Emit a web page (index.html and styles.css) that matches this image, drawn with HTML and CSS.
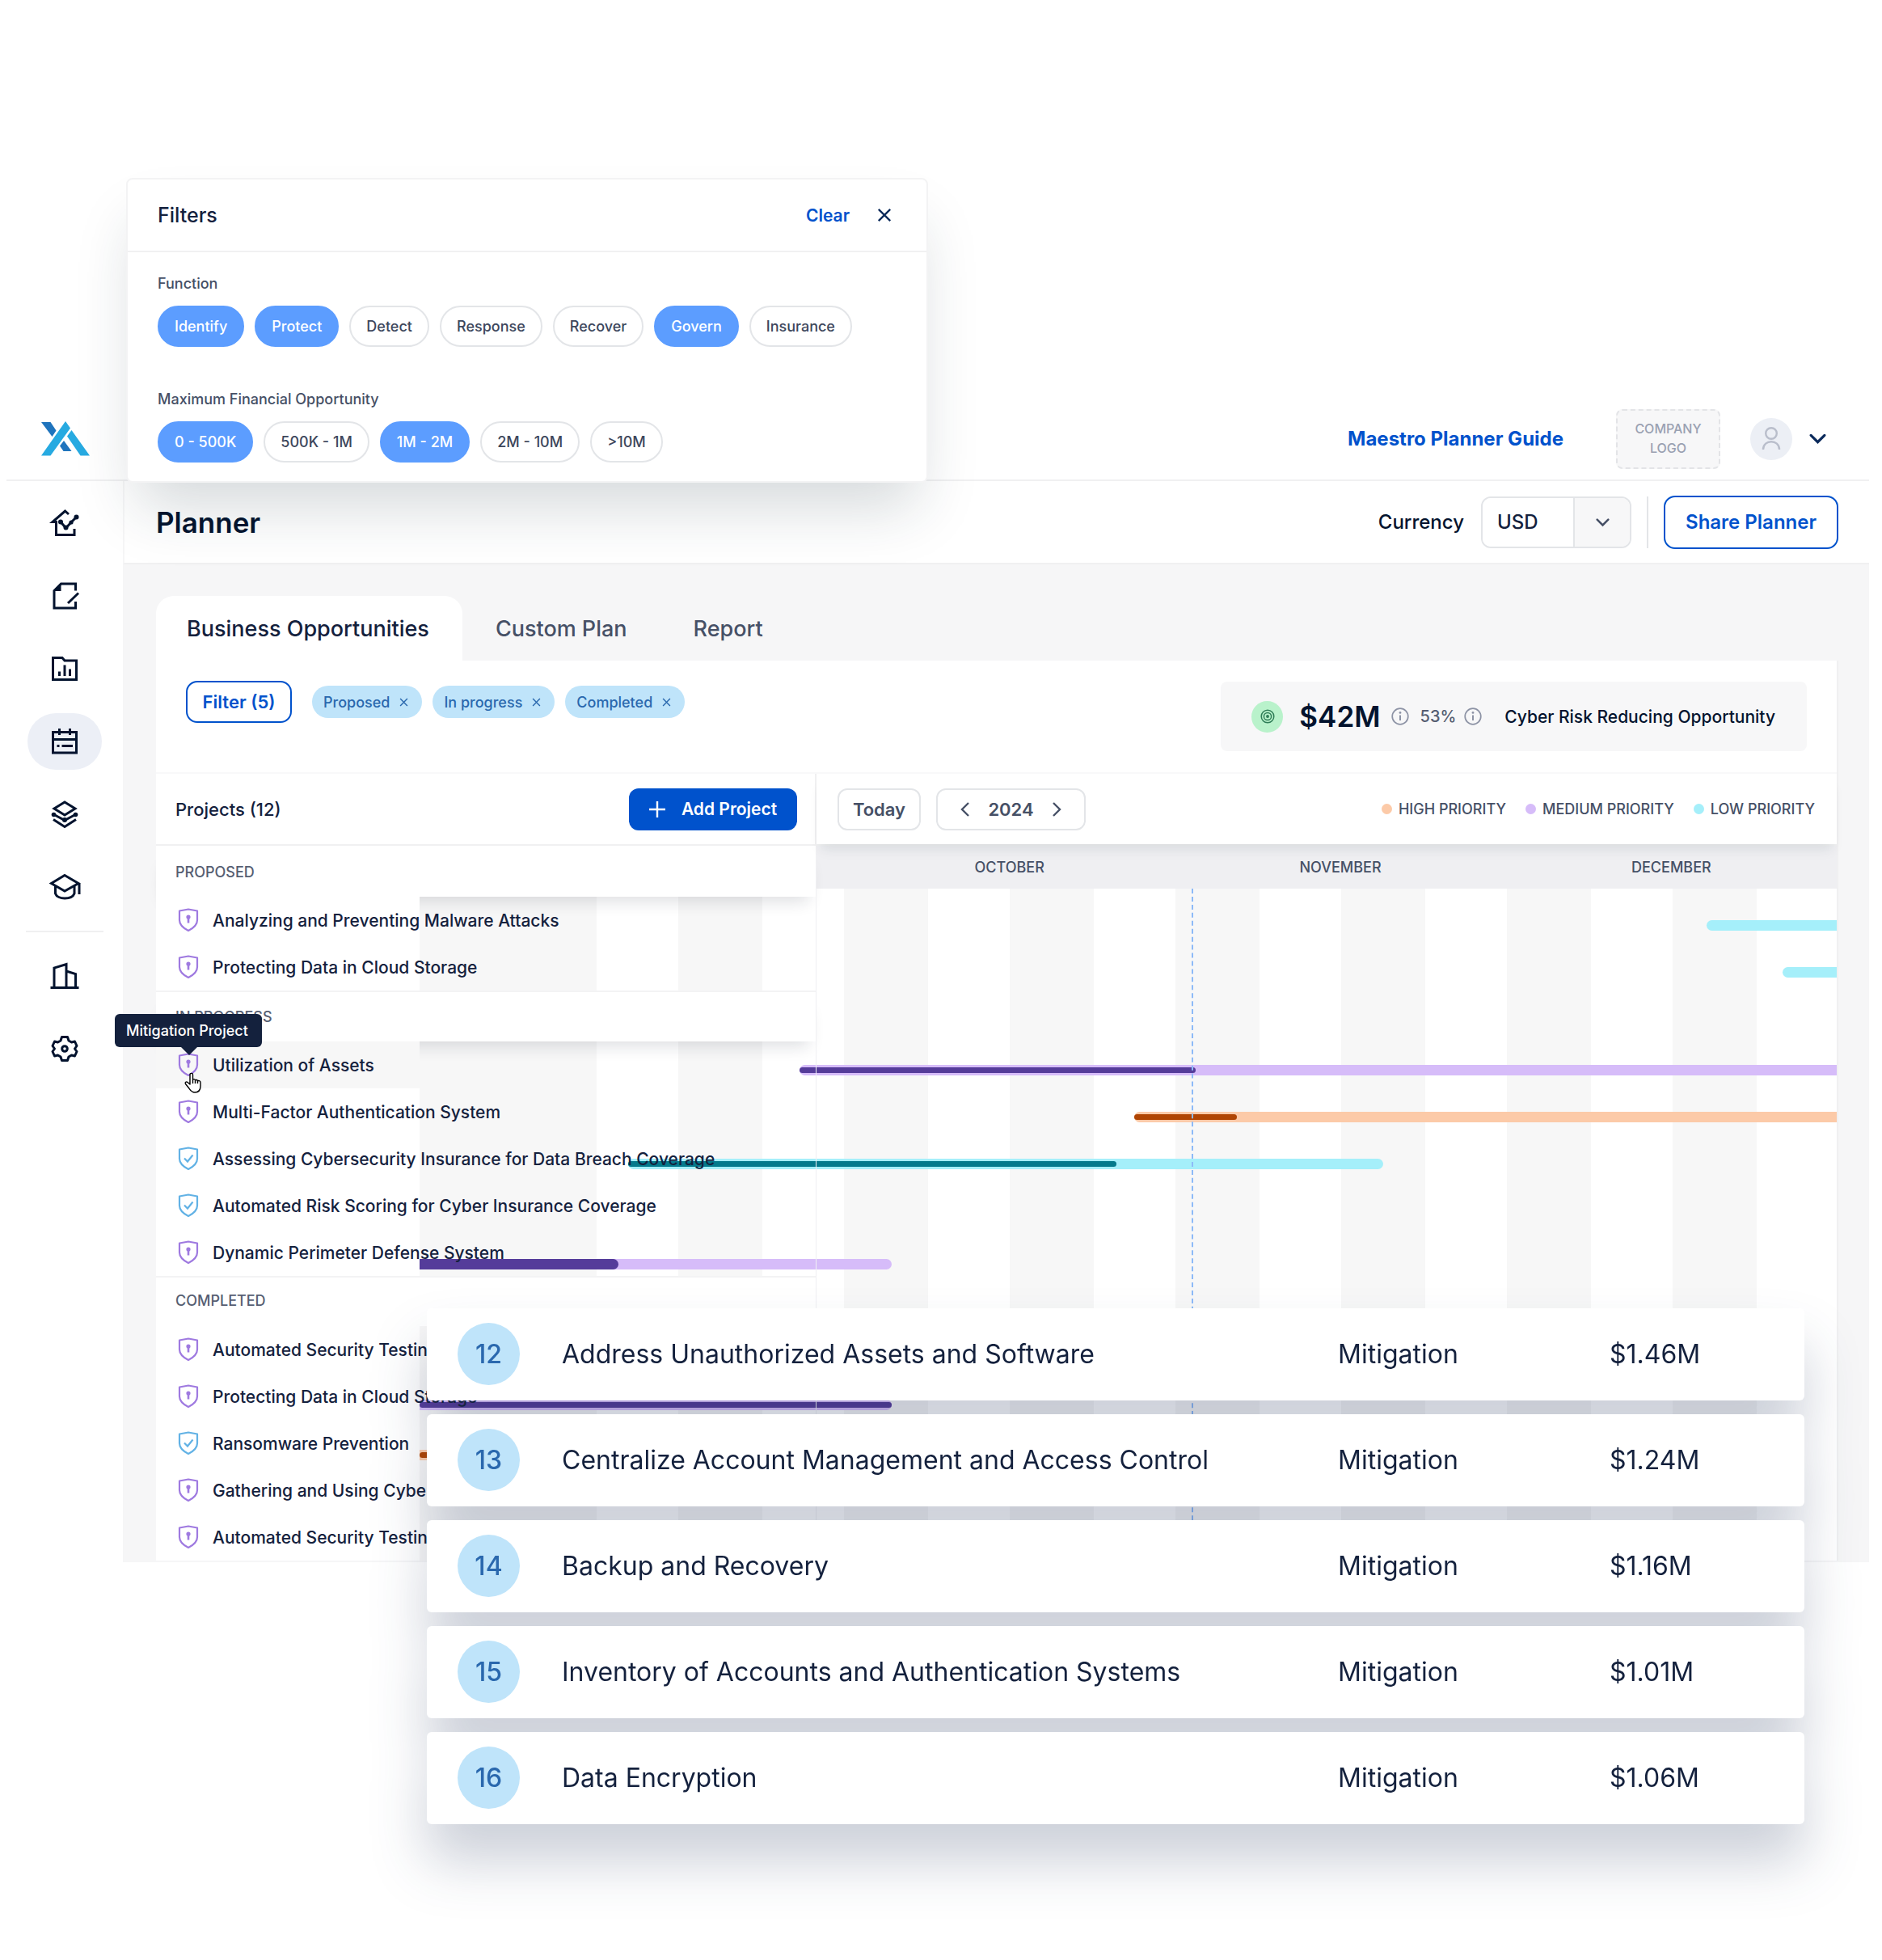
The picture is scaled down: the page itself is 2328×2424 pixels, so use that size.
FILE: index.html
```html
<!DOCTYPE html>
<html lang="en">

<head>
    <meta charset="UTF-8">
    <meta name="viewport" content="width=device-width, initial-scale=1.0">
    <title>Planner</title>
    <link rel="stylesheet" href="styles.css">
</head>

<body>
    <!-- shared icons -->
    <svg class="symbols" aria-hidden="true">
        <symbol id="shield-lock" viewBox="0 0 26 30">
            <path d="M13 1.5 L24 3.5 V15 C24 21 19 25 13 28 C7 25 2 21 2 15 V3.5 Z" fill="none" stroke="currentColor" stroke-width="2.2" stroke-linejoin="round"/>
            <circle cx="13" cy="11" r="2.6" fill="currentColor"/>
            <path d="M13 11 V18.5" stroke="currentColor" stroke-width="2.6"/>
        </symbol>
        <symbol id="shield-check" viewBox="0 0 26 30">
            <path d="M13 1.5 L24 3.5 V15 C24 21 19 25 13 28 C7 25 2 21 2 15 V3.5 Z" fill="none" stroke="currentColor" stroke-width="2.2" stroke-linejoin="round"/>
            <path d="M8 14.5 L12 18.5 L18.5 10.5" fill="none" stroke="currentColor" stroke-width="2.2"/>
        </symbol>
        <symbol id="info" viewBox="0 0 22 22">
            <circle cx="11" cy="11" r="9.8" fill="none" stroke="currentColor" stroke-width="1.7"/>
            <path d="M11 9.5 V16" stroke="currentColor" stroke-width="2"/>
            <circle cx="11" cy="6.4" r="1.4" fill="currentColor"/>
        </symbol>
        <symbol id="cross" viewBox="0 0 20 20">
            <path d="M2 2 L18 18 M18 2 L2 18" fill="none" stroke="currentColor" stroke-width="2.6"/>
        </symbol>
        <symbol id="chevron" viewBox="0 0 20 14">
            <path d="M2 3 L10 11 L18 3" fill="none" stroke="currentColor" stroke-width="3" stroke-linecap="round"/>
        </symbol>
    </svg>

    <section class="filters" aria-label="Filters">
        <div class="filters-head">
            <h2>Filters</h2>
            <button type="button" class="clear-btn">Clear</button>
            <button type="button" class="close-btn" aria-label="Close"><svg width="18" height="18"><use href="#cross"/></svg></button>
        </div>
        <div class="filters-body">
            <h3>Function</h3>
            <div class="pills">
                <button type="button" class="pill on">Identify</button>
                <button type="button" class="pill on">Protect</button>
                <button type="button" class="pill">Detect</button>
                <button type="button" class="pill">Response</button>
                <button type="button" class="pill">Recover</button>
                <button type="button" class="pill on">Govern</button>
                <button type="button" class="pill">Insurance</button>
            </div>
            <h3>Maximum Financial Opportunity</h3>
            <div class="pills">
                <button type="button" class="pill on">0 - 500K</button>
                <button type="button" class="pill">500K - 1M</button>
                <button type="button" class="pill on">1M - 2M</button>
                <button type="button" class="pill">2M - 10M</button>
                <button type="button" class="pill">&gt;10M</button>
            </div>
        </div>
    </section>

    <div class="app">
        <header class="topbar">
            <a href="#" class="logo" aria-label="Home">
                <svg width="60" height="43" viewBox="0 0 60 43">
                    <path d="M0 1 H11.5 L18.5 11.5 L13.5 19 Z M28 24 L37.5 37 H27.5 L23 30.5 Z" fill="#1f74bd"/>
                    <path d="M30 0 L36 8.5 L11.5 42.5 H0 Z M37.5 11 L60 42.5 H48.5 L32 18.5 Z" fill="#27aae1"/>
                </svg>
            </a>
            <a href="#" class="guide">Maestro Planner Guide</a>
            <div class="company">COMPANY<br>LOGO</div>
            <button type="button" class="account" aria-label="Account">
                <span class="avatar">
                    <svg width="24" height="30" viewBox="0 0 24 30" fill="none" stroke="#b9becb" stroke-width="2.4">
                        <circle cx="12" cy="8" r="6.8"/>
                        <path d="M2 28 C2 15 22 15 22 28"/>
                    </svg>
                </span>
                <svg width="21" height="15"><use href="#chevron"/></svg>
            </button>
        </header>

        <div class="shell">
            <nav class="sidebar">
                <a href="#" aria-label="Home">
                    <svg viewBox="0 0 40 40">
                        <path d="M25 9 L20.5 5 L5 18.5 H9.5 V34.5 H32 V27" />
                        <path d="M15 18.500 L21.500 26 L28 19 L34.500 12.500"/>
                        <g class="dot"><circle cx="15" cy="18.500" r="3"/><circle cx="21.500" cy="25.500" r="3"/><circle cx="28" cy="19" r="2.600"/><circle cx="34.500" cy="12.500" r="3"/></g>
                    </svg>
                </a>
                <a href="#" aria-label="Assessments">
                    <svg viewBox="0 0 40 40">
                        <path d="M33.500 13.500 V5 H15.500 L7 13.500 V35 H33.500 V27"/>
                        <path d="M15.500 5 V14 H7 Z" class="dot"/>
                        <path d="M24 29 L37 16.500"/>
                    </svg>
                </a>
                <a href="#" aria-label="Reports">
                    <svg viewBox="0 0 40 40">
                        <path d="M5.500 6.500 H17 L20 10 H34.500 V33.500 H5.500 Z"/>
                        <path d="M13.500 29 V23.500 M20 29 V15.500 M26.500 29 V20.500"/>
                    </svg>
                </a>
                <a href="#" class="active" aria-label="Planner">
                    <svg viewBox="0 0 40 40">
                        <path d="M5.500 8.500 H34.500 V34 H5.500 Z M5.500 17.500 H34.500"/>
                        <path d="M13.500 4 V12 M26.500 4 V12"/>
                        <path d="M10.500 25.500 H13.500 M16.500 25.500 H30"/>
                    </svg>
                </a>
                <a href="#" aria-label="Portfolio">
                    <svg viewBox="0 0 40 40">
                        <path d="M20 5 L33 13 L20 21 L7 13 Z"/>
                        <path d="M6 20 L20 27.500 L34 20 M6 26.500 L20 35.500 L34 26.500"/>
                        <g class="dot"><circle cx="6.500" cy="20.500" r="2.800"/><circle cx="20" cy="27" r="3"/><circle cx="33.500" cy="20.500" r="2.800"/></g>
                    </svg>
                </a>
                <a href="#" aria-label="Academy">
                    <svg viewBox="0 0 40 40">
                        <path d="M20 5.500 L37 15.500 L20 25 L3.500 15.500 Z M38 15 V29"/>
                        <path d="M8.500 18.500 V28 C11 36 29 36 32 28 V18.500"/>
                    </svg>
                </a>
                <hr>
                <a href="#" aria-label="Company">
                    <svg viewBox="0 0 40 40">
                        <path d="M2.500 34.500 H37.500 M7 34.500 V10 L22 5.500 V34.500 M22 14 L33.500 17.500 V34.500"/>
                    </svg>
                </a>
                <a href="#" aria-label="Settings">
                    <svg viewBox="0 0 40 40">
                        <path d="M16.500 5.500 H23.500 L25 10 L28.500 12 L32.500 11 L35 16.500 L32.500 20 L35 23.500 L32.500 29 L28.500 28 L25 30 L23.500 34.500 H16.500 L15 30 L11.500 28 L7.500 29 L5 23.500 L7.500 20 L5 16.500 L7.500 11 L11.500 12 L15 10 Z" stroke-linejoin="round"/>
                        <circle cx="20" cy="20" r="3.300"/>
                    </svg>
                </a>
            </nav>

            <main>
                <div class="titlebar">
                    <h1>Planner</h1>
                    <label for="currency">Currency</label>
                    <span class="select-box">
                        <select id="currency"><option>USD</option></select>
                        <span class="select-arrow"><svg width="17" height="12"><use href="#chevron"/></svg></span>
                    </span>
                    <span class="sep"></span>
                    <button type="button" class="outline-btn share-btn">Share Planner</button>
                </div>

                <div class="content">
                    <div class="tabs">
                        <button type="button" class="tab active">Business Opportunities</button>
                        <button type="button" class="tab">Custom Plan</button>
                        <button type="button" class="tab">Report</button>
                    </div>

                    <div class="card">
                        <div class="summary">
                            <button type="button" class="outline-btn filter-btn">Filter (5)</button>
                            <button type="button" class="chip">Proposed <svg width="11" height="11"><use href="#cross"/></svg></button>
                            <button type="button" class="chip">In progress <svg width="11" height="11"><use href="#cross"/></svg></button>
                            <button type="button" class="chip">Completed <svg width="11" height="11"><use href="#cross"/></svg></button>
                            <div class="kpi">
                                <span class="kpi-icon">
                                    <svg width="18" height="18" viewBox="0 0 18 18" fill="none" stroke="#2f7d57" stroke-width="1.500">
                                        <circle cx="9" cy="9" r="7.800"/><circle cx="9" cy="9" r="4.600"/><circle cx="9" cy="9" r="1.200" fill="#2f7d57"/>
                                    </svg>
                                </span>
                                <strong>$42M</strong>
                                <svg class="info" width="22" height="22"><use href="#info"/></svg>
                                <span class="percent">53%</span>
                                <svg class="info" width="22" height="22"><use href="#info"/></svg>
                                <span class="kpi-text">Cyber Risk Reducing Opportunity</span>
                            </div>
                        </div>

                        <div class="toolbar">
                            <div class="toolbar-left">
                                <h2>Projects (12)</h2>
                                <button type="button" class="add-btn">
                                    <svg width="20" height="20" viewBox="0 0 20 20"><path d="M10 0 V20 M0 10 H20" stroke="#fff" stroke-width="2.400"/></svg>
                                    Add Project
                                </button>
                            </div>
                            <div class="toolbar-right">
                                <button type="button" class="today-btn">Today</button>
                                <div class="year">
                                    <button type="button" aria-label="Previous year"><svg width="12" height="18" viewBox="0 0 12 18"><path d="M10 1 L2 9 L10 17"/></svg></button>
                                    <span>2024</span>
                                    <button type="button" aria-label="Next year"><svg width="12" height="18" viewBox="0 0 12 18"><path d="M2 1 L10 9 L2 17"/></svg></button>
                                </div>
                                <ul class="legend">
                                    <li class="high">HIGH PRIORITY</li>
                                    <li class="medium">MEDIUM PRIORITY</li>
                                    <li class="low">LOW PRIORITY</li>
                                </ul>
                            </div>
                        </div>

                        <div class="gantt">
                            <div class="group-line">
                                <h3 class="group">PROPOSED</h3>
                                <div class="months"><span>OCTOBER</span><span>NOVEMBER</span><span>DECEMBER</span></div>
                            </div>
                            <div class="row">
                                <div class="name"><svg class="mitigation"><use href="#shield-lock"/></svg>Analyzing and Preventing Malware Attacks</div>
                                <div class="track"><div class="bar low open" style="margin-left: 90.8%; width: 9.2%"></div></div>
                            </div>
                            <div class="row">
                                <div class="name"><svg class="mitigation"><use href="#shield-lock"/></svg>Protecting Data in Cloud Storage</div>
                                <div class="track"><div class="bar low open" style="margin-left: 96.2%; width: 3.8%"></div></div>
                            </div>

                            <h3 class="group">IN PROGRESS</h3>
                            <div class="row hover">
                                <div class="name">
                                    <svg class="mitigation"><use href="#shield-lock"/></svg>Utilization of Assets
                                    <span class="tooltip" role="tooltip">Mitigation Project</span>
                                    <svg class="pointer" viewBox="0 0 22 26">
                                        <path d="M7.500 15 V3 C7.500 .8 11 .8 11 3 V10 C11 8 14 8.300 14 10.300 C14.300 8.800 17 9.200 17 11.300 C17.500 10 20.500 10.500 20.500 12.800 V17 C20.500 22 18 25 13.500 25 C9.500 25 8 22.500 6 19.500 L2 14.500 C.8 12.500 3 11.200 4.500 12.500 Z M11 10 V14 M14 10.500 V14 M17 11.500 V14" fill="#fff" stroke="#000" stroke-width="1.400" stroke-linejoin="round"/>
                                    </svg>
                                </div>
                                <div class="track"><div class="bar medium open" style="margin-left: 26.8%; width: 73.2%"><i style="width: 38.2%"></i></div></div>
                            </div>
                            <div class="row">
                                <div class="name"><svg class="mitigation"><use href="#shield-lock"/></svg>Multi-Factor Authentication System</div>
                                <div class="track"><div class="bar high open" style="margin-left: 50.4%; width: 49.6%"><i style="width: 14.7%"></i></div></div>
                            </div>
                            <div class="row">
                                <div class="name"><svg class="insurance"><use href="#shield-check"/></svg>Assessing Cybersecurity Insurance for Data Breach Coverage</div>
                                <div class="track"><div class="bar low" style="margin-left: 14.7%; width: 53.3%"><i style="width: 64.7%"></i></div></div>
                            </div>
                            <div class="row">
                                <div class="name"><svg class="insurance"><use href="#shield-check"/></svg>Automated Risk Scoring for Cyber Insurance Coverage</div>
                                <div class="track"></div>
                            </div>
                            <div class="row">
                                <div class="name"><svg class="mitigation"><use href="#shield-lock"/></svg>Dynamic Perimeter Defense System</div>
                                <div class="track late"><div class="bar medium started thick" style="width: 33.3%"><i style="width: 42.1%"></i></div></div>
                            </div>

                            <h3 class="group flat">COMPLETED</h3>
                            <div class="row">
                                <div class="name"><svg class="mitigation"><use href="#shield-lock"/></svg>Automated Security Testing</div>
                                <div class="track"></div>
                            </div>
                            <div class="row">
                                <div class="name"><svg class="mitigation"><use href="#shield-lock"/></svg>Protecting Data in Cloud Storage</div>
                                <div class="track mid"><div class="bar medium started" style="width: 33.3%"><i style="width: 100%"></i></div></div>
                            </div>
                            <div class="row">
                                <div class="name"><svg class="insurance"><use href="#shield-check"/></svg>Ransomware Prevention</div>
                                <div class="track late"><div class="bar high started" style="width: 30%"><i style="width: 100%"></i></div></div>
                            </div>
                            <div class="row">
                                <div class="name"><svg class="mitigation"><use href="#shield-lock"/></svg>Gathering and Using Cyber Intel</div>
                                <div class="track"></div>
                            </div>
                            <div class="row">
                                <div class="name"><svg class="mitigation"><use href="#shield-lock"/></svg>Automated Security Testing</div>
                                <div class="track"></div>
                            </div>
                            <div class="panel-edge"></div>
                            <div class="today-line"></div>
                        </div>
                    </div>
                </div>
            </main>
        </div>
    </div>

    <div class="ranking">
        <table>
            <tr><td class="rank"><span>12</span></td><td>Address Unauthorized Assets and Software</td><td class="type">Mitigation</td><td class="value">$1.46M</td></tr>
            <tr><td class="rank"><span>13</span></td><td>Centralize Account Management and Access Control</td><td class="type">Mitigation</td><td class="value">$1.24M</td></tr>
            <tr><td class="rank"><span>14</span></td><td>Backup and Recovery</td><td class="type">Mitigation</td><td class="value">$1.16M</td></tr>
            <tr><td class="rank"><span>15</span></td><td>Inventory of Accounts and Authentication Systems</td><td class="type">Mitigation</td><td class="value">$1.01M</td></tr>
            <tr><td class="rank"><span>16</span></td><td>Data Encryption</td><td class="type">Mitigation</td><td class="value">$1.06M</td></tr>
        </table>
    </div>
</body>

</html>
```
FILE: styles.css
```css
* {
    box-sizing: border-box;
}

body {
    font-family: Inter, Roboto, sans-serif;
    font-size: 21px;
    font-weight: 500;
    color: #14213d;
    background-color: #fff;
    margin: 0;
    padding: 220px 0 0;
}

h1, h2, h3, ul {
    margin: 0;
    padding: 0;
    font-weight: 500;
}

button {
    font: inherit;
    color: inherit;
    background: none;
    border: none;
    padding: 0;
    cursor: pointer;
}

a {
    color: #0052cc;
    text-decoration: none;
}

.symbols {
    display: none;
}

/* filters popup */
.filters {
    position: relative;
    z-index: 3;
    width: 992px;
    margin: 0 0 -102px 156px;
    background-color: #fff;
    border: 2px solid #f3f3f4;
    border-radius: 8px;
    box-shadow: 0 44px 70px -14px rgba(30, 50, 60, 0.18);
}

.filters-head {
    display: flex;
    align-items: center;
    height: 90px;
    padding: 0 43px 0 37px;
    border-bottom: 2px solid #f1f1f2;
}

.filters-head h2 {
    flex: 1;
    font-size: 25px;
}

.clear-btn {
    color: #0052cc;
    font-size: 21px;
    font-weight: 600;
    margin-right: 34px;
}

.close-btn {
    display: flex;
    color: #0b2a5b;
}

.filters-body {
    padding: 25px 37px 23px;
}

.filters-body h3 {
    font-size: 18px;
    line-height: 28px;
    color: #465066;
    margin-bottom: 13px;
}

.pills {
    display: flex;
    gap: 13px;
}

.pills + h3 {
    margin-top: 51px;
}

.pill {
    height: 51px;
    padding: 0 19px;
    border: 2px solid #e3e5e8;
    border-radius: 26px;
    font-size: 18px;
    color: #3d475c;
    background-color: #fff;
}

.pill.on {
    background-color: #5c9dff;
    border-color: #5c9dff;
    color: #fff;
}

/* app frame */
.app {
    margin: 0 16px 0 8px;
}

.topbar {
    display: flex;
    align-items: center;
    height: 100px;
    padding: 0 53px 3px 43px;
    border-bottom: 2px solid #f0f0f1;
}

.logo {
    display: flex;
    margin-right: auto;
}

.guide {
    font-size: 24px;
    font-weight: 700;
    margin-right: 65px;
}

.company {
    width: 129px;
    padding: 10px 0 12px;
    border: 2px dashed #e3e4e7;
    border-radius: 8px;
    background-color: #f7f7f8;
    color: #9aa1b2;
    font-size: 16px;
    line-height: 24px;
    text-align: center;
}

.account {
    display: flex;
    align-items: center;
    gap: 21px;
    margin-left: 37px;
    color: #0b2a5b;
}

.avatar {
    display: flex;
    align-items: center;
    justify-content: center;
    width: 52px;
    height: 52px;
    border-radius: 50%;
    background-color: #eceff5;
}

.shell {
    display: flex;
}

.sidebar {
    display: flex;
    flex-direction: column;
    align-items: center;
    gap: 20px;
    width: 144px;
    padding-top: 17px;
}

.sidebar a {
    display: flex;
    align-items: center;
    justify-content: center;
    width: 92px;
    height: 70px;
    border-radius: 35px;
}

.sidebar a.active {
    background-color: #eceff6;
}

.sidebar svg {
    width: 40px;
    height: 40px;
    fill: none;
    stroke: #03132e;
    stroke-width: 3;
}

.sidebar .dot {
    fill: #03132e;
    stroke: none;
}

.sidebar hr {
    width: 96px;
    height: 2px;
    margin: -1px 0;
    border: none;
    background-color: #f0f0f1;
}

main {
    flex: 1;
    min-width: 0;
    background-color: #f6f6f7;
}

.titlebar {
    display: flex;
    align-items: center;
    height: 103px;
    padding: 0 38px 0 39px;
    background-color: #fff;
    border-bottom: 2px solid #f0f0f1;
    border-left: 2px solid #f6f6f7;
    font-size: 24px;
    color: #03132e;
}

.titlebar h1 {
    flex: 1;
    font-size: 35px;
    font-weight: 600;
}

.select-box {
    display: flex;
    width: 186px;
    height: 64px;
    margin-left: 21px;
    border: 2px solid #e3e5e8;
    border-radius: 12px;
    overflow: hidden;
}

.select-box select {
    flex: 1;
    appearance: none;
    border: none;
    background-color: #fff;
    padding: 0 18px;
    font: inherit;
    color: #14213d;
}

.select-arrow {
    display: flex;
    align-items: center;
    justify-content: center;
    width: 70px;
    background-color: #f7f7f8;
    border-left: 2px solid #e3e5e8;
    color: #465066;
}

.sep {
    width: 2px;
    height: 64px;
    margin: 0 19px;
    background-color: #e3e5e8;
}

.outline-btn {
    border: 2px solid #0052cc;
    border-radius: 14px;
    background-color: #fff;
    color: #0052cc;
    font-weight: 600;
}

.share-btn {
    width: 216px;
    height: 66px;
    font-size: 24px;
}

.content {
    padding: 39px 38px 2px 41px;
}

/* tabs */
.tabs {
    display: flex;
    height: 80px;
}

.tab {
    padding: 0 41px;
    font-size: 27px;
    color: #465066;
}

.tab.active {
    padding: 0 41px 0 38px;
    background-color: #fff;
    border-radius: 22px 22px 0 0;
    color: #14213d;
}

.card {
    background-color: #fff;
    border-right: 2px solid #f0f0f1;
}

.summary {
    display: flex;
    align-items: center;
    height: 138px;
    padding: 0 37px;
}

.filter-btn {
    width: 131px;
    height: 52px;
    margin: 0 12px 36px 0;
    font-size: 22px;
}

.chip {
    display: flex;
    align-items: center;
    gap: 12px;
    height: 40px;
    padding: 0 17px 0 14px;
    margin: 0 0 36px 13px;
    border-radius: 20px;
    background-color: #bfe4fa;
    color: #2a68ae;
    font-size: 18px;
}

.kpi {
    display: flex;
    align-items: center;
    height: 86px;
    margin-left: auto;
    padding: 0 39px 0 38px;
    border-radius: 8px;
    background-color: #f7f7f8;
    color: #03132e;
}

.kpi-icon {
    display: flex;
    align-items: center;
    justify-content: center;
    width: 39px;
    height: 39px;
    border-radius: 50%;
    background-color: #b9f2cb;
}

.kpi strong {
    font-size: 35px;
    font-weight: 600;
    margin: 0 13px 0 20px;
}

.info {
    color: #8d93a5;
}

.percent {
    font-size: 20px;
    color: #565e72;
    margin: 0 10px 0 14px;
}

.kpi-text {
    font-size: 21px;
    margin-left: 28px;
}

.toolbar {
    display: flex;
    position: relative;
    z-index: 1;
    height: 91px;
    border-top: 2px solid #f9f9fa;
    border-bottom: 2px solid #f0f0f1;
}

.toolbar-left {
    display: flex;
    align-items: center;
    justify-content: space-between;
    width: 817px;
    padding: 0 22px 0 24px;
    border-right: 2px solid #f0f0f1;
}

.toolbar-left h2 {
    font-size: 22px;
}

.add-btn {
    display: flex;
    align-items: center;
    justify-content: center;
    gap: 20px;
    width: 208px;
    height: 52px;
    border-radius: 12px;
    background-color: #0052cc;
    color: #fff;
    font-weight: 600;
    font-size: 21px;
}

.toolbar-right {
    display: flex;
    align-items: center;
    flex: 1;
    padding: 0 27px 0 26px;
    color: #465066;
    box-shadow: 0 12px 14px -6px rgba(20, 50, 60, 0.1);
}

.today-btn,
.year {
    height: 52px;
    border: 2px solid #e3e5e8;
    border-radius: 12px;
    font-size: 22px;
    font-weight: 600;
}

.today-btn {
    width: 103px;
    margin-right: 19px;
}

.year {
    display: flex;
    align-items: center;
    justify-content: space-between;
    width: 185px;
    padding: 0 28px;
}

.year button {
    display: flex;
}

.year svg {
    fill: none;
    stroke: #465066;
    stroke-width: 2.4;
}

.legend {
    display: flex;
    gap: 24px;
    margin-left: auto;
    list-style: none;
    font-size: 18px;
}

.legend li {
    display: flex;
    align-items: center;
    gap: 8px;
}

.legend li::before {
    content: "";
    width: 13px;
    height: 13px;
    border-radius: 50%;
    background-color: #fccaa8;
}

.legend .medium::before {
    background-color: #d6bcf9;
}

.legend .low::before {
    background-color: #a5effa;
}

/* gantt */
.gantt {
    position: relative;
    background-image:
        linear-gradient(#f7f7f7, #f7f7f7),
        linear-gradient(90deg, #f7f7f7 104px, transparent 104px);
    background-size: 115px 100%, 205px 100%;
    background-position: 326px 0, 31px 0;
    background-repeat: no-repeat, repeat-x;
}

.group-line {
    display: flex;
    align-items: flex-start;
}

.group {
    position: relative;
    width: 817px;
    padding: 0 24px;
    border-top: 2px solid #f3f3f4;
    background-color: #fff;
    font-size: 18px;
    line-height: 61px;
    color: #565e72;
    box-shadow: 0 16px 20px -10px rgba(20, 30, 50, 0.14);
}

.group-line .group {
    border-top-color: #fff;
}

.group.flat {
    box-shadow: none;
    padding-bottom: 3px;
    line-height: 57px;
}

.months {
    display: flex;
    flex: 1;
    padding: 0 0 0 34px;
    background-color: #efeff2;
    font-size: 18px;
    line-height: 53px;
    color: #465066;
}

.months span {
    flex: 1;
    text-align: center;
}

.row {
    display: flex;
    height: 58px;
}

/* long names run over the bars */
.name {
    position: relative;
    z-index: 1;
    display: flex;
    align-items: center;
    gap: 17px;
    width: 326px;
    padding-left: 27px;
    background-color: #fff;
    white-space: nowrap;
}

.row.hover .name {
    z-index: 2;
    background-color: #f7f7f7;
}

.name > svg {
    flex: none;
    width: 26px;
    height: 30px;
}

.mitigation {
    color: #9f7ae0;
}

.insurance {
    color: #62b2e5;
}

.track {
    flex: 1;
    padding-top: 29px;
}

.track.mid {
    padding-top: 33px;
}

.track.late {
    padding-top: 37px;
}

.bar {
    display: flex;
    align-items: center;
    position: relative;
    height: 13px;
    border-radius: 7px;
}

.bar i {
    height: 7px;
    border-radius: 4px;
}

.bar.thick i {
    height: 13px;
    border-radius: 0 7px 7px 0;
}

.bar.open {
    border-radius: 7px 0 0 7px;
}

.bar.started {
    border-radius: 0 7px 7px 0;
}

.bar.low {
    background-color: #a5effa;
}

.bar.low i {
    background-color: #047a8c;
}

.bar.medium {
    background-color: #d6bcf9;
}

.bar.medium i {
    background-color: #553c9a;
}

.bar.high {
    background-color: #fccaa8;
}

.bar.high i {
    background-color: #b04503;
}

.panel-edge {
    position: absolute;
    top: 0;
    bottom: 0;
    left: 816px;
    border-left: 1px solid #f0f0f3;
}

.today-line {
    position: absolute;
    top: 53px;
    bottom: 0;
    left: 61.6%;
    border-left: 2px dashed #8dbaf8;
}

.tooltip {
    position: absolute;
    left: -51px;
    top: -34px;
    padding: 0 17px 0 14px;
    border-radius: 6px;
    background-color: #14213d;
    color: #fff;
    font-size: 18px;
    line-height: 41px;
}

.tooltip::after {
    content: "";
    position: absolute;
    top: 100%;
    left: 82px;
    border: 10px solid transparent;
    border-top-color: #14213d;
    border-bottom: none;
}

.name > .pointer {
    position: absolute;
    left: 34px;
    top: 38px;
    width: 23px;
    height: 26px;
}

/* ranked opportunities over the chart */
.ranking {
    position: relative;
    z-index: 2;
    margin: -331px 96px 0 528px;
    padding-bottom: 150px;
    filter: drop-shadow(0 46px 34px rgba(25, 40, 80, 0.22));
}

.ranking table {
    width: 100%;
    border-spacing: 0 17px;
    font-size: 32px;
    font-weight: 400;
}

.ranking td {
    height: 114px;
    padding: 0 0 2px;
    background-color: #fff;
}

.ranking .rank {
    width: 167px;
    padding-left: 38px;
    border-radius: 6px 0 0 6px;
}

.rank span {
    display: block;
    width: 77px;
    border-radius: 50%;
    background-color: #bfe4fa;
    color: #2a68ae;
    font-weight: 500;
    line-height: 77px;
    text-align: center;
}

.ranking .type {
    width: 336px;
}

.ranking .value {
    width: 241px;
    border-radius: 0 6px 6px 0;
}
```
